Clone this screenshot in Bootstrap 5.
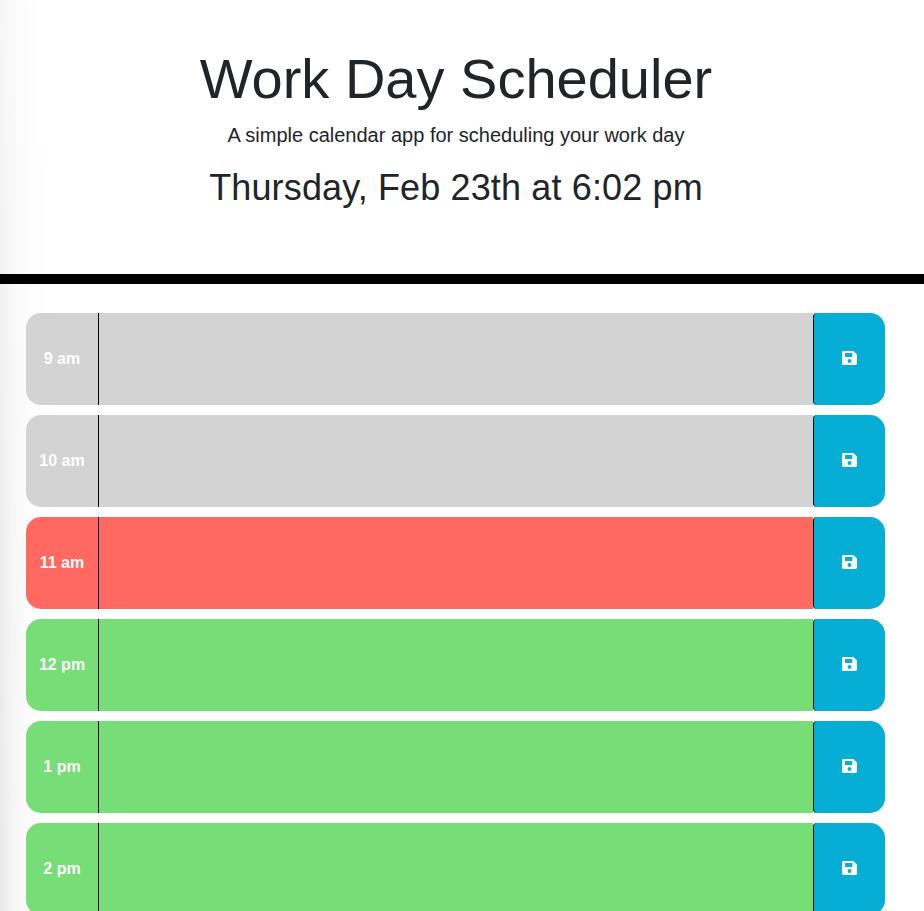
<!DOCTYPE html>
<html lang="en">
<head>
<meta charset="utf-8">
<meta name="viewport" content="width=device-width, initial-scale=1">
<title>Work Day Scheduler</title>
<link href="https://cdn.jsdelivr.net/npm/bootstrap@5.3.0/dist/css/bootstrap.min.css" rel="stylesheet">
<style>
  html { overflow: hidden; }
  body {
    font-family: "Liberation Sans", Arial, sans-serif;
    height: 911px;
    overflow: hidden;
    /* soft shade along the left edge, deeper towards the bottom */
    background:
      linear-gradient(to bottom, rgba(255,255,255,.6), rgba(255,255,255,0) 95%) 0 0 / 50px 100% no-repeat,
      linear-gradient(to right, #e8e8e8, #f4f4f4 12px, #fcfcfc 28px, #fff 50px) 0 0 / 50px 100% no-repeat,
      #fff;
  }
  .page-head { height: 284px; padding: 45px 12px 0 0; border-bottom: 10px solid #000; }
  .page-head h1 { font-size: 56px; font-weight: 400; }
  .page-head .tagline { font-size: 20px; }
  .page-head .today { font-size: 36px; letter-spacing: .14px; }
  .schedule { padding: 29px 39px 0 26px; gap: 10px; }
  .time-block {
    height: 92px; flex: none; color: #fff; border-radius: 15px;
    background-size: 787px 100%; background-repeat: no-repeat;
  }
  .hour { width: 73px; border-right: 1px solid #000; }
  .save-btn {
    width: 72px; background: #06aed5; color: #fff;
    border: 0; border-left: 1px solid #000; border-radius: 4px 15px 15px 4px;
  }
  .save-btn svg { margin-bottom: 2px; }
  .past { background-image: linear-gradient(#d3d3d3, #d3d3d3); }
  .present { background-image: linear-gradient(#ff6961, #ff6961); }
  .future { background-image: linear-gradient(#77dd77, #77dd77); }
</style>
<script src="https://cdn.jsdelivr.net/npm/bootstrap@5.3.0/dist/js/bootstrap.bundle.min.js"></script>
</head>
<body>
<svg class="d-none" xmlns="http://www.w3.org/2000/svg">
  <symbol id="save" viewBox="0 0 15 14">
    <path fill="currentColor" fill-rule="evenodd" d="M1.4 0H11.3L15 3.5V12.6Q15 14 13.6 14H1.4Q0 14 0 12.6V1.4Q0 0 1.4 0ZM3 2V6H10.3V2ZM7.5 8A2 2 0 1 0 7.5 12A2 2 0 1 0 7.5 8Z"/>
  </symbol>
</svg>
<header class="page-head text-center">
  <h1 class="mb-2">Work Day Scheduler</h1>
  <p class="tagline mb-3">A simple calendar app for scheduling your work day</p>
  <h2 class="today fw-normal mb-0">Thursday, Feb 23th at 6:02 pm</h2>
</header>
<main class="schedule d-flex flex-column">
  <div class="time-block past d-flex">
    <div class="hour d-flex align-items-center justify-content-center fw-bold">9 am</div>
    <div class="flex-grow-1"></div>
    <button class="save-btn d-flex align-items-center justify-content-center p-0" aria-label="save"><svg width="15" height="14"><use href="#save"/></svg></button>
  </div>
  <div class="time-block past d-flex">
    <div class="hour d-flex align-items-center justify-content-center fw-bold">10 am</div>
    <div class="flex-grow-1"></div>
    <button class="save-btn d-flex align-items-center justify-content-center p-0" aria-label="save"><svg width="15" height="14"><use href="#save"/></svg></button>
  </div>
  <div class="time-block present d-flex">
    <div class="hour d-flex align-items-center justify-content-center fw-bold">11 am</div>
    <div class="flex-grow-1"></div>
    <button class="save-btn d-flex align-items-center justify-content-center p-0" aria-label="save"><svg width="15" height="14"><use href="#save"/></svg></button>
  </div>
  <div class="time-block future d-flex">
    <div class="hour d-flex align-items-center justify-content-center fw-bold">12 pm</div>
    <div class="flex-grow-1"></div>
    <button class="save-btn d-flex align-items-center justify-content-center p-0" aria-label="save"><svg width="15" height="14"><use href="#save"/></svg></button>
  </div>
  <div class="time-block future d-flex">
    <div class="hour d-flex align-items-center justify-content-center fw-bold">1 pm</div>
    <div class="flex-grow-1"></div>
    <button class="save-btn d-flex align-items-center justify-content-center p-0" aria-label="save"><svg width="15" height="14"><use href="#save"/></svg></button>
  </div>
  <div class="time-block future d-flex">
    <div class="hour d-flex align-items-center justify-content-center fw-bold">2 pm</div>
    <div class="flex-grow-1"></div>
    <button class="save-btn d-flex align-items-center justify-content-center p-0" aria-label="save"><svg width="15" height="14"><use href="#save"/></svg></button>
  </div>
</main>
</body>
</html>
